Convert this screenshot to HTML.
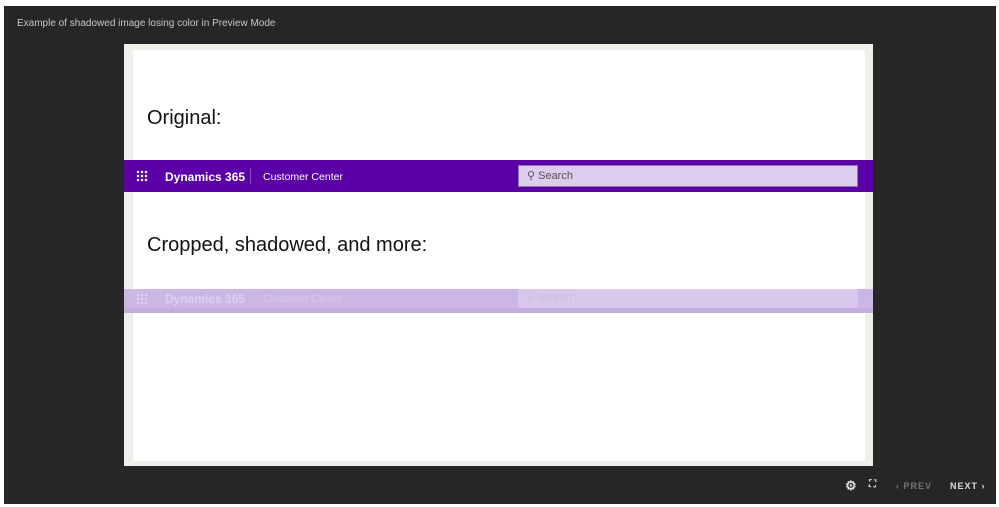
<!DOCTYPE html>
<html><head><style>
body{margin:0;width:999px;height:507px;background:#fff;position:relative;overflow:hidden;font-family:"Liberation Sans",sans-serif}
.frame{position:absolute;left:4px;top:6px;width:992px;height:498px;background:#262626}
.title{position:absolute;left:17px;top:18px;color:#c8c8c8;font-size:10px}
.slide{position:absolute;left:124px;top:44px;width:749px;height:422px;background:#f0f0eb}
.inner{position:absolute;left:9px;top:6px;width:732px;height:411px;background:#fff}
.h{position:absolute;left:147px;font-size:20px;color:#111}
.bar{position:absolute;left:124px;width:749px}
.dots{position:absolute;left:12px;width:12px;height:12px;background:radial-gradient(circle,#fff 1px,transparent 1.5px) 0 0/4px 4px}
.t{position:absolute;color:#fff;font-weight:bold;font-size:12px}
.t2{position:absolute;color:#fff;font-size:10.5px}
.sb{position:absolute;left:394px;width:338px;border:1px solid #8a7aa5}
.ctl{position:absolute;top:481px;color:#ddd;font-size:9px;font-weight:bold;letter-spacing:1px}
</style></head><body>
<div class="frame"></div>
<div class="title">Example of shadowed image losing color in Preview Mode</div>
<div class="slide"><div class="inner"></div></div>
<div class="h" style="top:107px">Original:</div>
<div class="h" style="top:234px">Cropped, shadowed, and more:</div>
<div class="bar" style="top:160px;height:32px;background:#5a00a6">
 <div class="dots" style="top:10px"></div>
 <div class="t" style="left:41px;top:10px">Dynamics 365</div>
 <div style="position:absolute;left:126px;top:8px;width:1px;height:16px;background:#8a50c0"></div>
 <div class="t2" style="left:139px;top:11px">Customer Center</div>
 <div class="sb" style="top:5px;height:20px;background:#dccced"><span style="position:absolute;left:8px;top:3px;font-size:11px;color:#555">⚲ Search</span></div>
</div>
<div class="bar" style="top:289px;height:24px;background:#cbb6e4;border-bottom:0">
 <div style="position:absolute;left:0;top:19px;width:749px;height:5px;background:#c4aee0"></div>
 <div class="dots" style="top:4px;opacity:.4"></div>
 <div class="t" style="left:41px;top:3px;color:#ddd0ee">Dynamics 365</div>
 <div class="t2" style="left:139px;top:4px;color:#d8caeb">Customer Center</div>
 <div style="position:absolute;left:394px;top:0;width:340px;height:19px;background:#d8c9ec"><span style="position:absolute;left:8px;top:2px;font-size:11px;color:#cbbde0">⚲ Search</span></div>
</div>
<div class="ctl" style="left:845px;top:478px;font-size:13px">⚙</div>
<div class="ctl" style="left:869px;top:479px;font-size:10px;letter-spacing:0">⛶</div>
<div class="ctl" style="left:896px;color:#777">‹ PREV</div>
<div class="ctl" style="left:950px">NEXT ›</div>
</body></html>
